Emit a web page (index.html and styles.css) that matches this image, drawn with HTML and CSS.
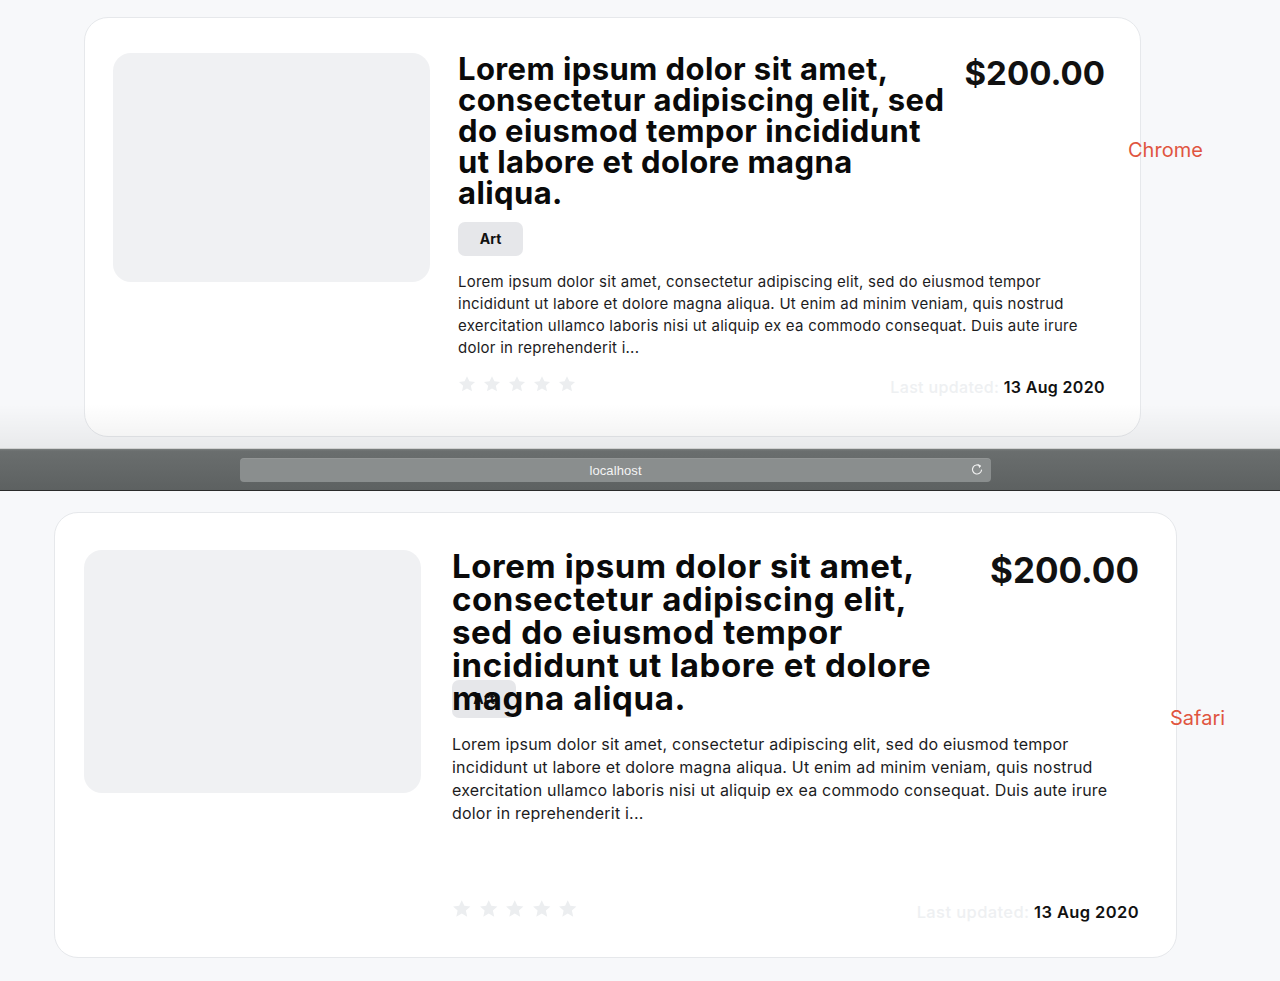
FILE: index.html
```html
<!DOCTYPE html>
<html lang="en">
<head>
<meta charset="utf-8">
<title>Chrome vs Safari card</title>
<link rel="stylesheet" href="styles.css">
</head>
<body>
  <section class="shot shot-chrome">
    <article class="card card-chrome">
      <div class="thumb"></div>
      <div class="body">
        <div class="head">
          <h2 class="title">Lorem ipsum dolor sit amet, consectetur adipiscing elit, sed do eiusmod tempor incididunt ut labore et dolore magna aliqua.</h2>
          <div class="price">$200.00</div>
        </div>
        <div class="tag">Art</div>
        <p class="desc">Lorem ipsum dolor sit amet, consectetur adipiscing elit, sed do eiusmod tempor incididunt ut labore et dolore magna aliqua. Ut enim ad minim veniam, quis nostrud exercitation ullamco laboris nisi ut aliquip ex ea commodo consequat. Duis aute irure dolor in reprehenderit i...</p>
        <div class="foot">
          <div class="stars">
            <svg viewBox="0 0 24 24"><path d="M12 1.5l3.2 6.9 7.5.8-5.6 5.1 1.6 7.4L12 17.9l-6.7 3.8 1.6-7.4-5.6-5.1 7.5-.8z"/></svg>
            <svg viewBox="0 0 24 24"><path d="M12 1.5l3.2 6.9 7.5.8-5.6 5.1 1.6 7.4L12 17.9l-6.7 3.8 1.6-7.4-5.6-5.1 7.5-.8z"/></svg>
            <svg viewBox="0 0 24 24"><path d="M12 1.5l3.2 6.9 7.5.8-5.6 5.1 1.6 7.4L12 17.9l-6.7 3.8 1.6-7.4-5.6-5.1 7.5-.8z"/></svg>
            <svg viewBox="0 0 24 24"><path d="M12 1.5l3.2 6.9 7.5.8-5.6 5.1 1.6 7.4L12 17.9l-6.7 3.8 1.6-7.4-5.6-5.1 7.5-.8z"/></svg>
            <svg viewBox="0 0 24 24"><path d="M12 1.5l3.2 6.9 7.5.8-5.6 5.1 1.6 7.4L12 17.9l-6.7 3.8 1.6-7.4-5.6-5.1 7.5-.8z"/></svg>
          </div>
          <div class="updated"><span class="muted">Last updated:</span> <span class="date">13 Aug 2020</span></div>
        </div>
      </div>
    </article>
    <div class="label label-chrome">Chrome</div>
    <div class="fade"></div>
  </section>

  <div class="toolbar">
    <div class="urlbar">
      <span class="url">localhost</span>
      <svg class="reload" viewBox="0 0 16 16"><path d="M11.6 3.6A5.2 5.2 0 1 0 13.2 8" fill="none" stroke="#f2f2f2" stroke-width="1.3" stroke-linecap="round"/><path d="M9.2 1.4l3.4 1.6-2 3.1z" fill="#f2f2f2"/></svg>
    </div>
  </div>

  <section class="shot shot-safari">
    <article class="card card-safari">
      <div class="thumb"></div>
      <div class="body">
        <div class="head">
          <h2 class="title">Lorem ipsum dolor sit amet, consectetur adipiscing elit, sed do eiusmod tempor incididunt ut labore et dolore magna aliqua.</h2>
          <div class="price">$200.00</div>
        </div>
        <div class="tag">Art</div>
        <p class="desc">Lorem ipsum dolor sit amet, consectetur adipiscing elit, sed do eiusmod tempor incididunt ut labore et dolore magna aliqua. Ut enim ad minim veniam, quis nostrud exercitation ullamco laboris nisi ut aliquip ex ea commodo consequat. Duis aute irure dolor in reprehenderit i...</p>
        <div class="foot">
          <div class="stars">
            <svg viewBox="0 0 24 24"><path d="M12 1.5l3.2 6.9 7.5.8-5.6 5.1 1.6 7.4L12 17.9l-6.7 3.8 1.6-7.4-5.6-5.1 7.5-.8z"/></svg>
            <svg viewBox="0 0 24 24"><path d="M12 1.5l3.2 6.9 7.5.8-5.6 5.1 1.6 7.4L12 17.9l-6.7 3.8 1.6-7.4-5.6-5.1 7.5-.8z"/></svg>
            <svg viewBox="0 0 24 24"><path d="M12 1.5l3.2 6.9 7.5.8-5.6 5.1 1.6 7.4L12 17.9l-6.7 3.8 1.6-7.4-5.6-5.1 7.5-.8z"/></svg>
            <svg viewBox="0 0 24 24"><path d="M12 1.5l3.2 6.9 7.5.8-5.6 5.1 1.6 7.4L12 17.9l-6.7 3.8 1.6-7.4-5.6-5.1 7.5-.8z"/></svg>
            <svg viewBox="0 0 24 24"><path d="M12 1.5l3.2 6.9 7.5.8-5.6 5.1 1.6 7.4L12 17.9l-6.7 3.8 1.6-7.4-5.6-5.1 7.5-.8z"/></svg>
          </div>
          <div class="updated"><span class="muted">Last updated:</span> <span class="date">13 Aug 2020</span></div>
        </div>
      </div>
    </article>
    <div class="label label-safari">Safari</div>
  </section>
</body>
</html>
```

FILE: styles.css
```css
* { box-sizing: border-box; }

html, body {
  margin: 0;
  padding: 0;
}

body {
  width: 1280px;
  height: 981px;
  overflow: hidden;
  background: #f7f8fa;
  font-family: Inter, "Noto Sans", "Liberation Sans", sans-serif;
  color: #111;
}

.shot {
  position: relative;
}

.shot-chrome {
  height: 448px;
  padding: 17px 0 0 84px;
}

.shot-safari {
  height: 490px;
  padding: 21px 0 0 54px;
}

/* card */
.card {
  display: flex;
  background: #fff;
  border: 1px solid #e6e8eb;
  border-radius: 24px;
}

.thumb {
  flex: none;
  background: #f0f1f3;
  border-radius: 18px;
}

.body {
  flex: 1;
  display: flex;
  flex-direction: column;
  min-width: 0;
}

.head {
  display: flex;
  align-items: flex-start;
}

.title {
  flex: 1;
  margin: 0;
  font-weight: 700;
  color: #0a0a0a;
}

.price {
  flex: none;
  font-weight: 700;
  color: #111;
}

.tag {
  display: block;
  width: fit-content;
  background: #e6e7ea;
  border-radius: 7px;
  font-size: 14px;
  font-weight: 700;
  color: #111;
  text-align: center;
}

.desc {
  margin: 0;
  color: #1c1c1e;
}

.foot {
  display: flex;
  justify-content: space-between;
  align-items: flex-end;
}

.stars {
  display: flex;
}

.stars svg {
  display: block;
  fill: #eceef0;
}

.updated {
  font-weight: 600;
  white-space: nowrap;
}

.muted {
  color: #eef0f2;
  font-weight: 500;
}

.date {
  color: #111;
}

/* Chrome variant */
.card-chrome {
  width: 1057px;
  height: 420px;
  padding: 35px 35px 37px 28px;
  gap: 28px;
}

.card-chrome .thumb {
  width: 317px;
  height: 229px;
}

.card-chrome .head { gap: 16px; }

.card-chrome .title {
  font-size: 31px;
  line-height: 31px;
  letter-spacing: 0.4px;
}

.card-chrome .price {
  font-size: 33px;
  line-height: 40px;
}

.card-chrome .tag {
  margin-top: 14px;
  height: 34px;
  line-height: 34px;
  width: 65px;
}

.card-chrome .desc {
  margin-top: 15px;
  font-size: 15px;
  line-height: 22px;
  letter-spacing: 0.25px;
}

.card-chrome .foot { margin-top: 16px; }

.card-chrome .stars { gap: 7px; margin-bottom: 6px; }
.card-chrome .stars svg { width: 18px; height: 18px; }

.card-chrome .updated {
  font-size: 16px;
  line-height: 24px;
  letter-spacing: 0.35px;
}

/* Safari variant: the title overflows its fixed height and sits over the tag */
.card-safari {
  width: 1123px;
  height: 446px;
  padding: 37px 37px 32px 29px;
  gap: 31px;
}

.card-safari .thumb {
  width: 337px;
  height: 243px;
}

.card-safari .head {
  gap: 40px;
  position: relative;
  z-index: 1;
}

.card-safari .title {
  font-size: 33px;
  line-height: 33px;
  letter-spacing: 0.6px;
  height: 132px;
}

.card-safari .price {
  font-size: 35px;
  line-height: 40px;
}

.card-safari .tag {
  margin-top: -2px;
  height: 38px;
  line-height: 38px;
  width: 64px;
}

.card-safari .desc {
  margin-top: 15px;
  font-size: 16px;
  line-height: 23px;
  letter-spacing: 0.2px;
}

.card-safari .foot { margin-top: auto; }

.card-safari .stars { gap: 7px; margin-bottom: 7px; }
.card-safari .stars svg { width: 19.5px; height: 19.5px; }

.card-safari .updated {
  font-size: 16.5px;
  line-height: 25px;
  letter-spacing: 0.4px;
}

/* labels */
.label {
  position: absolute;
  font-size: 20px;
  line-height: 24px;
  color: #e0553f;
}

.label-chrome { left: 1128px; top: 138px; }
.label-safari { left: 1170px; top: 215px; }

.fade {
  position: absolute;
  left: 0;
  right: 0;
  bottom: 0;
  height: 44px;
  background: linear-gradient(to bottom, rgba(0,0,0,0), rgba(0,0,0,0.06));
  pointer-events: none;
}

/* safari toolbar */
.toolbar {
  height: 43px;
  background: linear-gradient(to bottom, #7b7f7f 0, #6a6e6e 2px, #5d6161 100%);
  border-top: 1px solid #cfd0d0;
  border-bottom: 1px solid #2a2b2b;
  padding: 9px 0 0 240px;
}

.urlbar {
  width: 751px;
  height: 24px;
  border-radius: 4px;
  background: #8a8e8e;
  box-shadow: inset 0 1px 0 rgba(255,255,255,0.08);
  display: flex;
  align-items: center;
  justify-content: center;
  position: relative;
}

.url {
  font-size: 13px;
  color: #f4f4f4;
  font-family: "Liberation Sans", Inter, sans-serif;
  letter-spacing: 0.1px;
}

.reload {
  position: absolute;
  right: 7px;
  top: 5px;
  width: 14px;
  height: 14px;
}
```
